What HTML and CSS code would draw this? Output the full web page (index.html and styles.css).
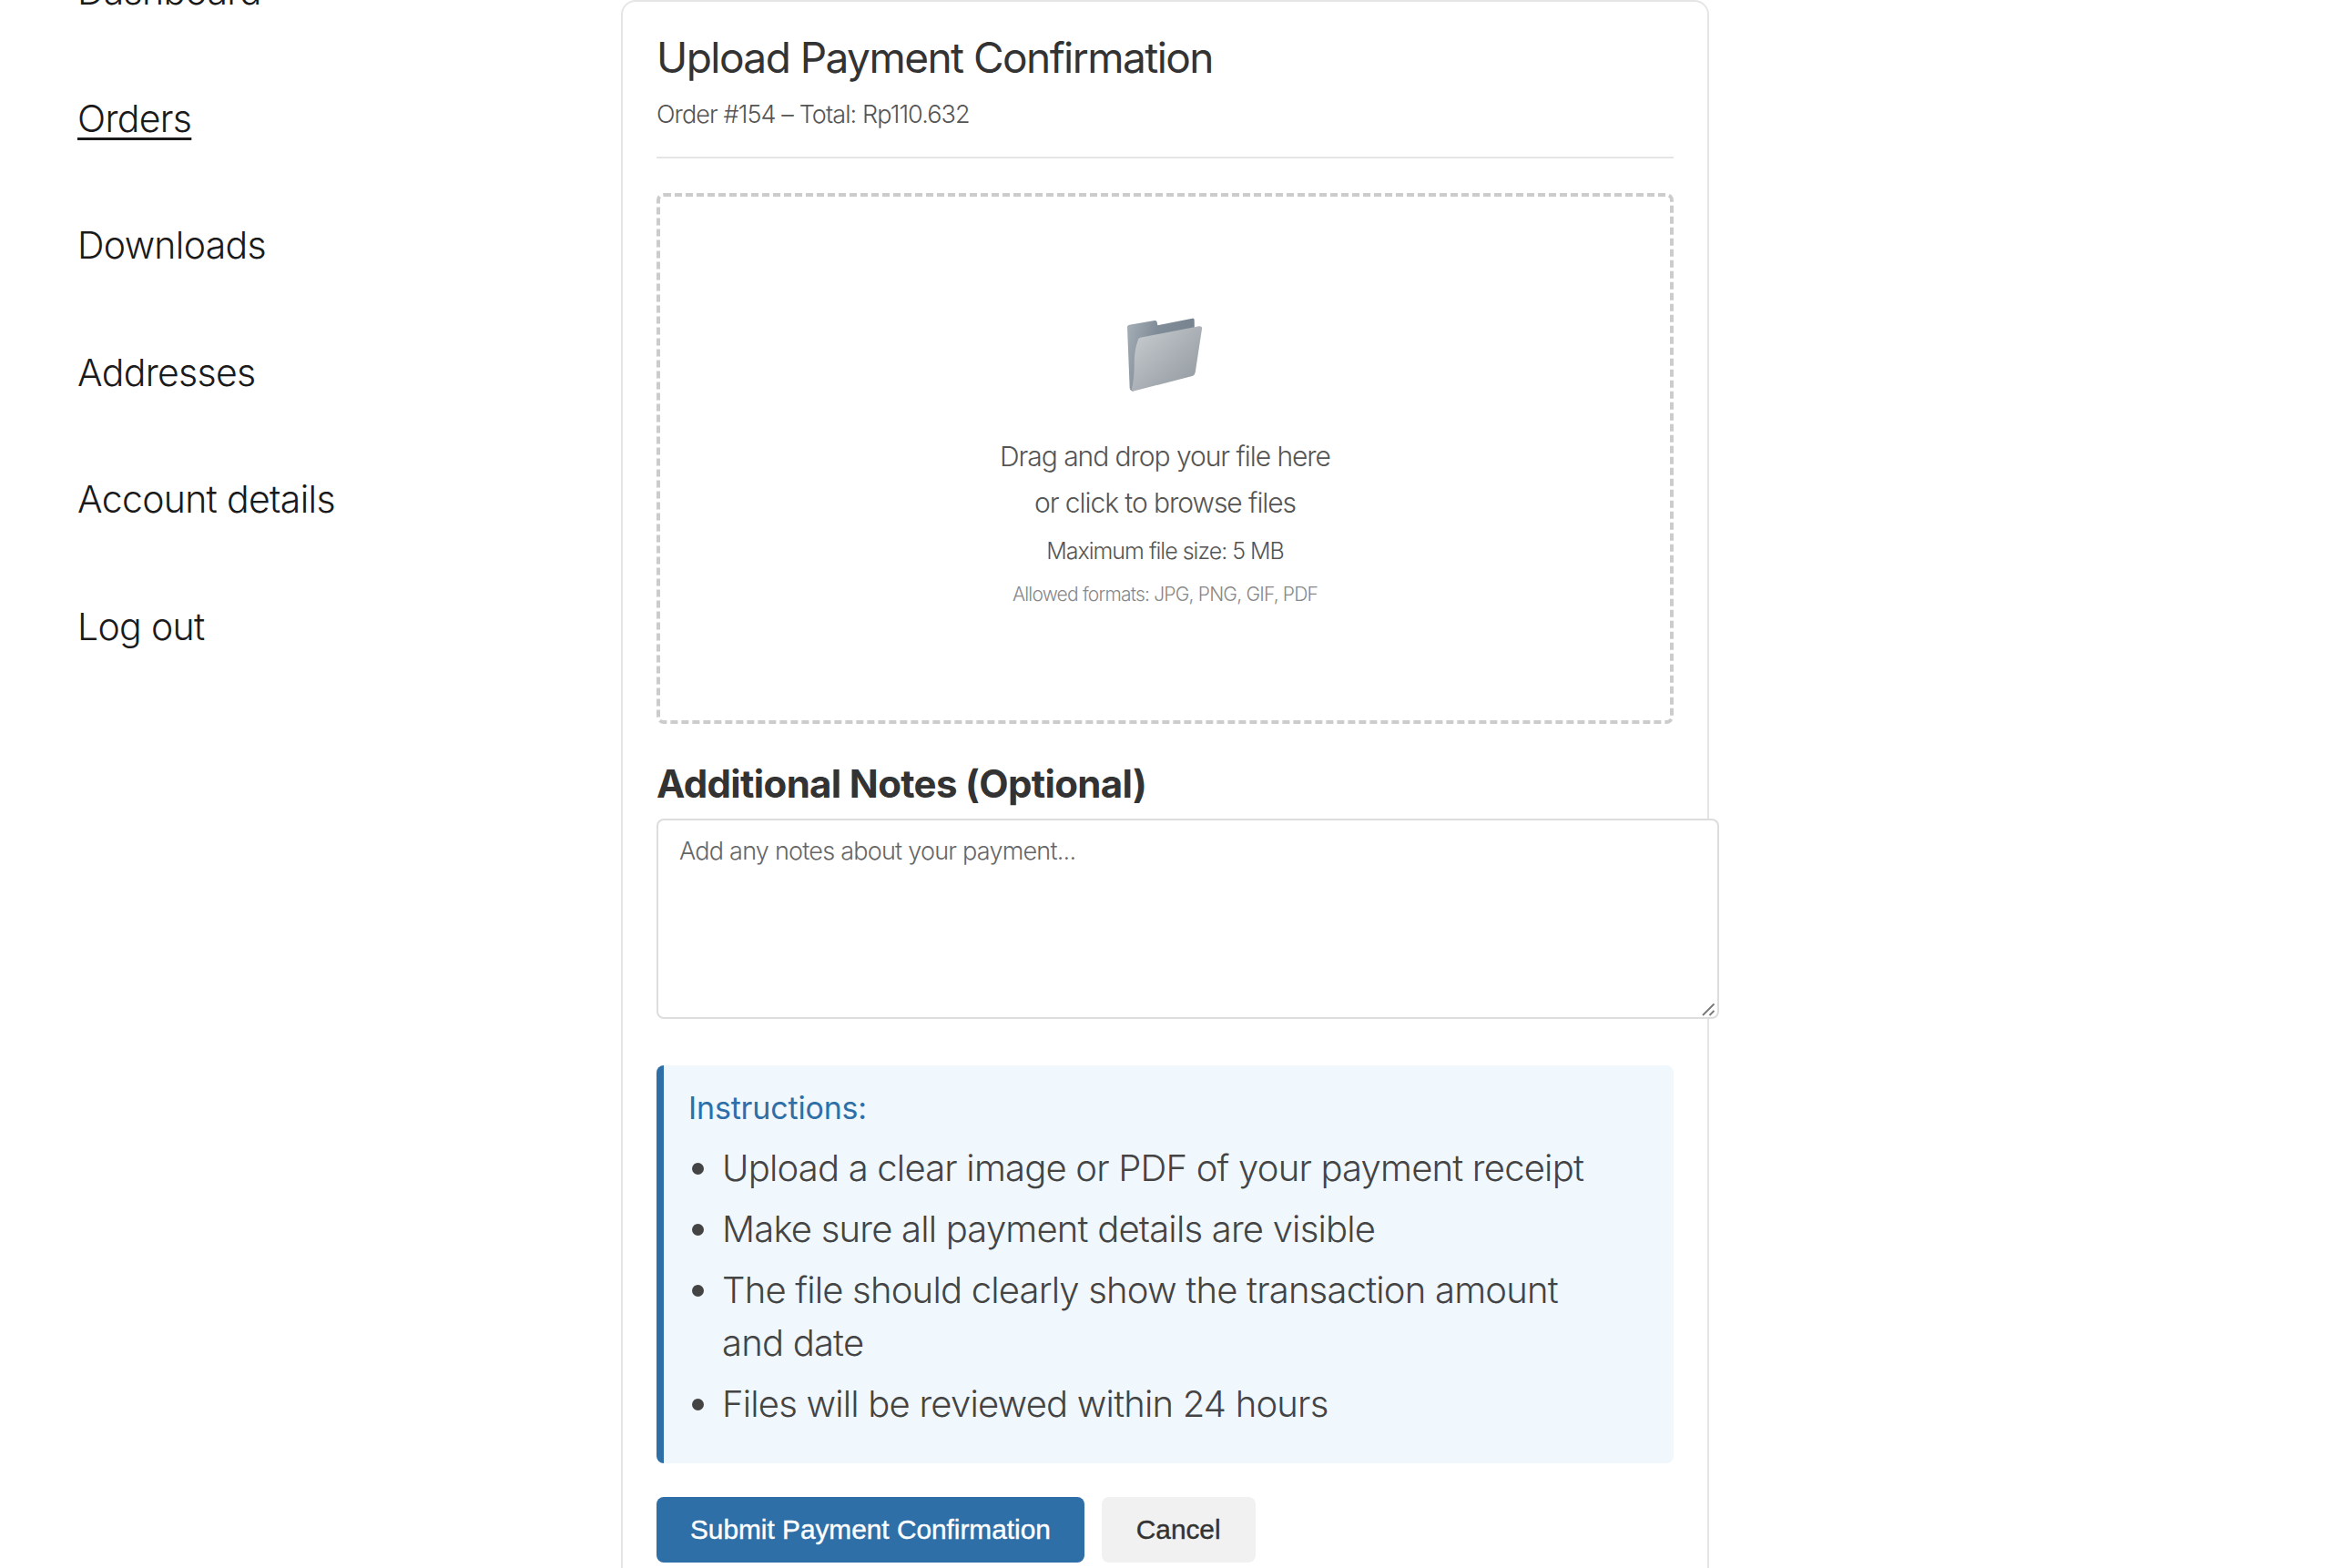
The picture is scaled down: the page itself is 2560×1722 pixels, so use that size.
FILE: index.html
```html
<!DOCTYPE html>
<html lang="en">
<head>
<meta charset="utf-8">
<title>Upload Payment Confirmation</title>
<link rel="stylesheet" href="styles.css">
</head>
<body>
<div class="page">
  <nav class="sidebar">
    <a class="nav-link" href="#">Dashboard</a>
    <a class="nav-link nav-link-active" href="#">Orders</a>
    <a class="nav-link" href="#">Downloads</a>
    <a class="nav-link" href="#">Addresses</a>
    <a class="nav-link" href="#">Account details</a>
    <a class="nav-link" href="#">Log out</a>
  </nav>
  <main class="card">
    <header class="card-header">
      <h1 class="card-title">Upload Payment Confirmation</h1>
      <p class="card-sub">Order #154 – Total: Rp110.632</p>
    </header>
    <div class="dropzone">
      <svg class="folder" viewBox="0 0 480 330" width="160" height="110" aria-hidden="true">
        <defs>
          <linearGradient id="folderBack" x1="0" y1="0" x2="1" y2="0.3">
            <stop offset="0" stop-color="#a7b0b8"/>
            <stop offset="0.45" stop-color="#808c98"/>
            <stop offset="1" stop-color="#76838e"/>
          </linearGradient>
          <linearGradient id="folderFront" x1="0" y1="0" x2="1" y2="1">
            <stop offset="0" stop-color="#cbcfd3"/>
            <stop offset="0.5" stop-color="#abb1b6"/>
            <stop offset="1" stop-color="#8f979e"/>
          </linearGradient>
          <filter id="soft" x="-5%" y="-5%" width="110%" height="110%">
            <feGaussianBlur stdDeviation="1.6"/>
          </filter>
        </defs>
        <g filter="url(#soft)">
          <path d="M114 88Q114 81 121 80L204 66Q211 65 212 71L214 82L328 59Q335 58 335 64L336 130L150 290L132 299Q124 298 122 288Z" fill="url(#folderBack)"/>
          <path d="M149 132Q149 124 157 122L350 85Q362 83 360 94L338 238Q336 247 328 249L138 298Q128 300 129 290Q138 250 137 200Q138 160 149 132Z" fill="url(#folderFront)"/>
        </g>
      </svg>
      <p class="drop-text">Drag and drop your file here<br>or click to browse files</p>
      <p class="drop-size">Maximum file size: 5 MB</p>
      <p class="drop-formats">Allowed formats: JPG, PNG, GIF, PDF</p>
    </div>
    <label class="notes-label" for="notes">Additional Notes (Optional)</label>
    <div class="notes-wrap">
      <textarea class="notes" id="notes" placeholder="Add any notes about your payment..."></textarea>
      <svg class="resizer" viewBox="0 0 15 15" width="15" height="15" aria-hidden="true">
        <path d="M1 14L13.5 1.5M8.5 14L13.5 9" fill="none" stroke="#777" stroke-width="1.8"/>
      </svg>
    </div>
    <section class="instructions">
      <h2 class="instructions-title">Instructions:</h2>
      <ul class="instructions-list">
        <li>Upload a clear image or PDF of your payment receipt</li>
        <li>Make sure all payment details are visible</li>
        <li>The file should clearly show the transaction amount and date</li>
        <li>Files will be reviewed within 24 hours</li>
      </ul>
    </section>
    <div class="actions">
      <button class="btn btn-primary" type="button">Submit Payment Confirmation</button>
      <button class="btn btn-secondary" type="button">Cancel</button>
    </div>
  </main>
</div>
</body>
</html>
```

FILE: styles.css
```css
html, body {
  margin: 0;
  height: 100%;
  overflow: hidden;
  background: #fff;
}

body {
  font-family: Inter, "Noto Sans", sans-serif;
}

.page {
  display: flex;
  align-items: flex-start;
  height: 1722px;
  overflow: hidden;
}

.sidebar {
  flex: 0 0 682px;
  box-sizing: border-box;
  margin-top: -38px;
  padding-left: 85px;
  display: flex;
  flex-direction: column;
  align-items: flex-start;
  gap: 83.6px;
}

.nav-link {
  font-size: 41px;
  font-weight: 300;
  line-height: 56px;
  letter-spacing: -0.7px;
  color: #1a1a1a;
  text-decoration: none;
}

.nav-link-active {
  text-decoration: underline;
  text-decoration-thickness: 3px;
  text-underline-offset: 6px;
}

.card {
  flex: 0 0 1195px;
  min-width: 0;
  box-sizing: border-box;
  padding: 31px 37px 40px;
  border: 2px solid #e5e5e5;
  border-radius: 16px;
  background: #fff;
}

.card-header {
  padding-bottom: 28px;
  border-bottom: 2px solid #e5e5e5;
}

.card-title {
  margin: 0;
  font-size: 46px;
  line-height: 60px;
  font-weight: 400;
  letter-spacing: -1.55px;
  color: #333;
}

.card-sub {
  margin: 15px 0 0;
  font-size: 27px;
  line-height: 36px;
  font-weight: 300;
  letter-spacing: -0.9px;
  color: #555;
}

.dropzone {
  box-sizing: border-box;
  height: 583px;
  margin-top: 38px;
  padding-top: 114px;
  border: 4px dashed #ccc;
  border-radius: 8px;
  display: flex;
  flex-direction: column;
  align-items: center;
  text-align: center;
}

.folder {
  display: block;
}

.drop-text {
  margin: 36px 0 0;
  font-size: 30px;
  line-height: 51px;
  font-weight: 300;
  letter-spacing: -1.05px;
  color: #555;
}

.drop-size {
  margin: 9px 0 0;
  font-size: 25px;
  line-height: 36px;
  font-weight: 300;
  letter-spacing: -1px;
  color: #555;
}

.drop-formats {
  margin: 15px 0 0;
  font-size: 21px;
  line-height: 30px;
  font-weight: 300;
  letter-spacing: -0.8px;
  color: #888;
}

.notes-label {
  display: block;
  margin-top: 38px;
  font-size: 42px;
  line-height: 56px;
  font-weight: 700;
  letter-spacing: -0.66px;
  color: #333;
}

.notes-wrap {
  position: relative;
  width: 1167px;
  height: 220px;
  margin-top: 10px;
}

.notes {
  display: block;
  box-sizing: border-box;
  width: 100%;
  height: 100%;
  padding: 17px 23px;
  border: 2px solid #ddd;
  border-radius: 8px;
  font-family: inherit;
  font-size: 27px;
  font-weight: 300;
  letter-spacing: -0.77px;
  outline: none;
  resize: none;
}

.notes::placeholder {
  color: #666;
  opacity: 1;
}

.resizer {
  position: absolute;
  right: 4px;
  bottom: 3px;
}

.instructions {
  margin-top: 51px;
  padding: 25px 30px 36px 27px;
  border-left: 8px solid #2f6fa7;
  border-radius: 8px;
  background: #f0f7fd;
}

.instructions-title {
  margin: 0;
  font-size: 34px;
  line-height: 44px;
  font-weight: 400;
  letter-spacing: -0.17px;
  color: #2f6fa7;
}

.instructions-list {
  margin: 15px 0 0;
  padding: 0 50px 0 37px;
  font-size: 40px;
  font-weight: 300;
  line-height: 58px;
  letter-spacing: -0.8px;
  color: #444;
}

.instructions-list li {
  margin-bottom: 9px;
}

.instructions-list li:last-child {
  margin-bottom: 0;
}

.actions {
  margin-top: 37px;
  display: flex;
  gap: 19px;
}

.btn {
  height: 72px;
  padding: 0 37px;
  border: 0;
  border-radius: 8px;
  font-family: "Liberation Sans", Arial, sans-serif;
  font-size: 29.8px;
  -webkit-text-stroke: 0.4px;
}

.btn-primary {
  background: #2f6fa7;
  color: #fff;
}

.btn-secondary {
  padding: 0 38px;
  background: #f1f1f1;
  color: #333;
}
```
